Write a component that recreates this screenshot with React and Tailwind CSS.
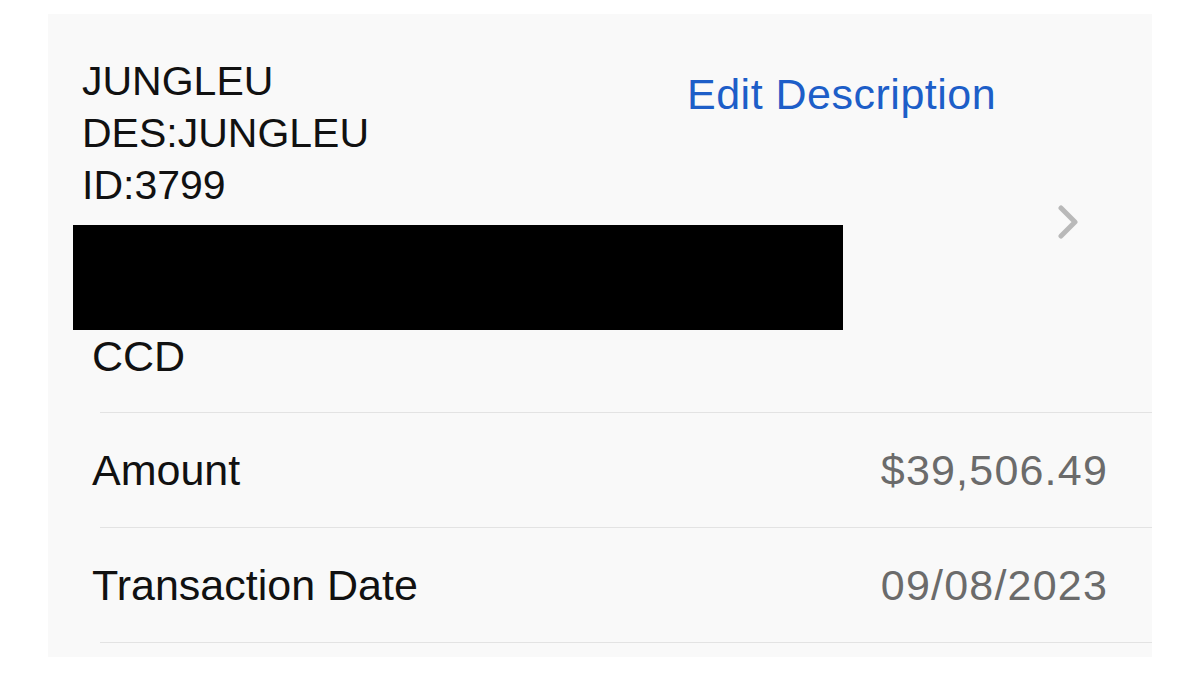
export default function App() {
  const rows = [
    { label: 'Amount', value: '$39,506.49' },
    { label: 'Transaction Date', value: '09/08/2023' },
  ]

  return (
    <div className="min-h-screen h-[675px] bg-white pt-[14px] font-['Liberation_Sans',Arial,sans-serif]">
      <div className="ml-[48px] w-[1104px] h-[643px] bg-[#f9f9f9] pt-[41px]">
        <div className="flex h-[156px]">
          <div className="w-[639px] pl-[34px] text-[41px] leading-[52px] text-[#111]">
            <div>JUNGLEU</div>
            <div>DES:JUNGLEU</div>
            <div>ID:3799</div>
          </div>
          <div className="flex-1 flex flex-col">
            <button className="mt-[13px] text-left text-[43px] leading-[52px] tracking-[0.5px] text-[#1d5ec8]">
              Edit Description
            </button>
            <div className="mt-[85px] flex justify-end pr-[73px]">
              <svg width="22" height="34" viewBox="0 0 22 34" fill="none">
                <path
                  d="M4 3 L18 17 L4 31"
                  stroke="#b9b9b9"
                  strokeWidth="5"
                  strokeLinecap="round"
                  strokeLinejoin="round"
                />
              </svg>
            </div>
          </div>
        </div>

        <div className="mt-[14px] ml-[25px] w-[770px] h-[105px] bg-black" />

        <div className="pl-[44px] pb-[30px] text-[43px] leading-[52px] text-[#111]">CCD</div>

        <div className="ml-[52px] h-px bg-[#e3e3e3]" />
        {rows.map((r) => (
          <div key={r.label}>
            <div className="flex justify-between items-center px-[44px] py-[31px] text-[43px] leading-[52px]">
              <span className="text-[#111]">{r.label}</span>
              <span className="text-[#6b6b6b] tracking-[1.2px]">{r.value}</span>
            </div>
            <div className="ml-[52px] h-px bg-[#e3e3e3]" />
          </div>
        ))}
      </div>
    </div>
  )
}
